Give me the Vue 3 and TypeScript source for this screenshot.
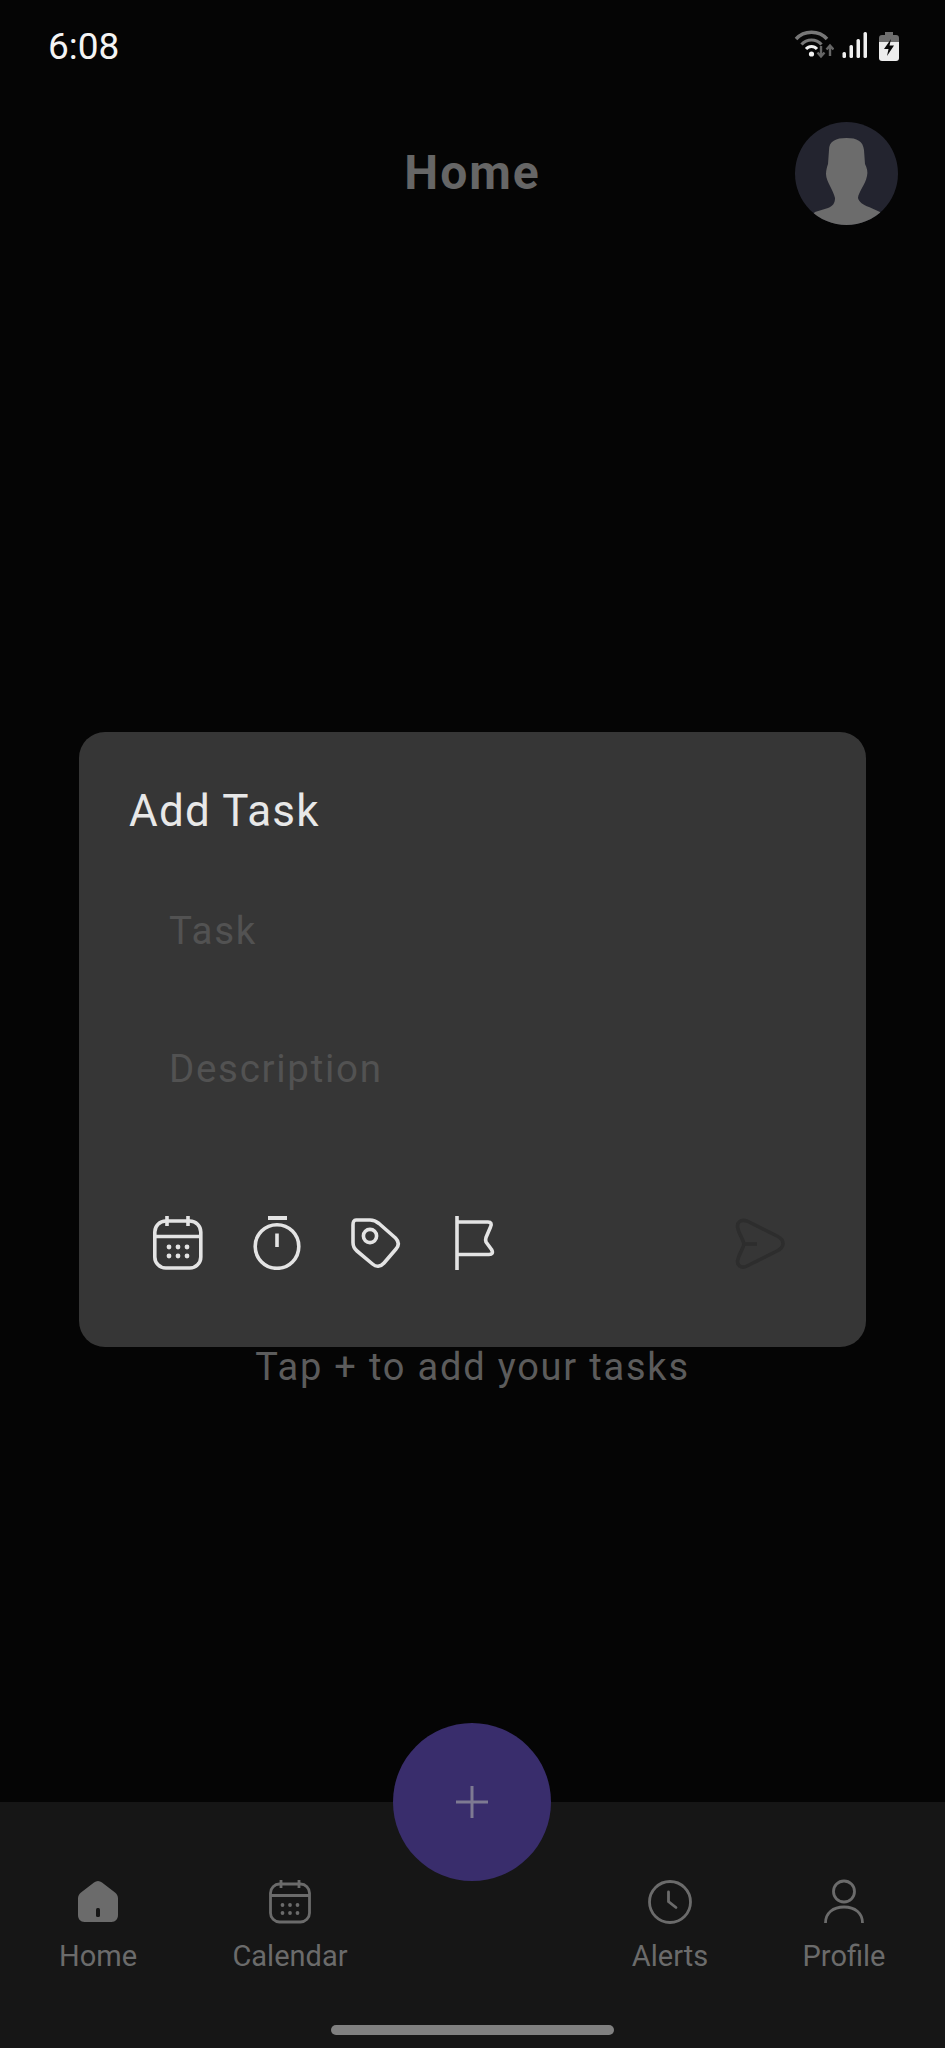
<script setup lang="ts">
interface NavItem { label: string; icon: string }
const navLeft: NavItem[] = [
  { label: 'Home', icon: 'home' },
  { label: 'Calendar', icon: 'calendar' },
]
const navRight: NavItem[] = [
  { label: 'Alerts', icon: 'clock' },
  { label: 'Profile', icon: 'user' },
]
const dots = [0, 1, 2].flatMap((c) => [0, 1].map((r) => ({ x: 16 + c * 9, y: 31 + r * 9, k: `${c}-${r}` })))
const smallDots = [0, 1, 2].flatMap((c) => [0, 1].map((r) => ({ x: 16.500 + c * 7.500, y: 26 + r * 8, k: `${c}-${r}` })))
</script>

<template>
  <div class="screen">
    <div class="status">
      <span class="time">6:08</span>
      <div class="status-icons">
        <svg width="40" height="30" viewBox="0 0 40 30" fill="none">
          <path d="M2 9 C10 0 25 0 33 9" stroke="#777" stroke-width="3.400" />
          <path d="M7.500 14.500 C13 8.500 22 8.500 27.500 14.500" stroke="#777" stroke-width="3.200" />
          <path d="M12 19 C15 15.500 20 15.500 23 19" stroke="#f2f2f2" stroke-width="3" />
          <circle cx="17.500" cy="24" r="2.600" fill="#f2f2f2" />
          <path d="M27 16v10M23.500 22.500l3.500 4 3.500-4" stroke="#666" stroke-width="2.400" />
          <path d="M36 26v-10M32.500 19.500l3.500-4 3.500 4" stroke="#666" stroke-width="2.400" />
        </svg>
        <svg class="signal" width="26" height="26" viewBox="0 0 26 26" fill="#efefef">
          <rect x="0.500" y="20" width="3.500" height="6" rx="1.500" />
          <rect x="7.500" y="13" width="3.500" height="13" rx="1.500" />
          <rect x="14.500" y="7" width="3.500" height="19" rx="1.500" />
          <rect x="21.500" y="0" width="3.500" height="26" rx="1.500" />
        </svg>
        <svg class="battery" width="20" height="29" viewBox="0 0 20 29">
          <path d="M6 0h8v3h3a3 3 0 0 1 3 3v6H0V6a3 3 0 0 1 3-3h3z" fill="#6e6e6e" />
          <path d="M0 10h20v16a3 3 0 0 1-3 3H3a3 3 0 0 1-3-3z" fill="#ededed" />
          <path d="M12 7L5 17h4.500L8 24l7-10.500h-4.500z" fill="#0a0a0a" />
        </svg>
      </div>
    </div>

    <header class="header">
      <h1 class="title">Home</h1>
      <svg class="avatar" width="103" height="103" viewBox="0 0 103 103">
        <defs>
          <clipPath id="avatar-clip"><circle cx="51.500" cy="51.500" r="51.500" /></clipPath>
        </defs>
        <g clip-path="url(#avatar-clip)">
          <rect width="103" height="103" fill="#23242f" />
          <path
            d="M34 28C34 19 41 16 51.500 16S68 19 69 28L70 42C72 46 73 50 72 54C71 59 69 62 67 66C65 70 63 73 63 76C64 80 68 83 74 85L85 90L95 103H8L20 90L33 86C38 84 40 81 40 76C39 72 37 68 35 64C33 60 31 56 31 52C31 48 32 45 33 42Z"
            fill="#6c6c6c"
          />
        </g>
      </svg>
    </header>

    <main class="content">
      <p class="hint">Tap + to add your tasks</p>
    </main>

    <nav class="bottom">
      <div class="nav-row">
        <div v-for="item in navLeft" :key="item.label" class="nav-item">
          <svg width="48" height="46" viewBox="0 0 48 46" fill="none">
            <template v-if="item.icon === 'home'">
              <path
                d="M20 3.500C22.500 1.500 25.500 1.500 28 3.500L41 13.500C43 15 44 17 44 19.500V36C44 40 41.500 43 37.500 43H10.500C6.500 43 4 40 4 36V19.500C4 17 5 15 7 13.500Z"
                fill="#6b6b6b"
              />
              <rect x="22" y="29" width="4" height="9" rx="1.500" fill="#161616" />
            </template>
            <template v-else>
              <g stroke="#6b6b6b" stroke-width="2.800">
                <rect x="4.500" y="5" width="39" height="38" rx="9" />
                <path d="M4.500 16.500H43.500M15 1V9M33 1V9" />
              </g>
              <circle v-for="d in smallDots" :key="d.k" :cx="d.x" :cy="d.y" r="1.900" fill="#6b6b6b" />
            </template>
          </svg>
          <span class="nav-label">{{ item.label }}</span>
        </div>
        <div class="nav-gap"></div>
        <div v-for="item in navRight" :key="item.label" class="nav-item">
          <svg width="48" height="46" viewBox="0 0 48 46" fill="none" stroke="#6b6b6b" stroke-width="2.800">
            <template v-if="item.icon === 'clock'">
              <circle cx="24" cy="23" r="20.500" />
              <path d="M22.500 13V22.500L30 28.500" stroke-linecap="round" />
            </template>
            <template v-else>
              <circle cx="24" cy="12.500" r="10.500" />
              <path d="M5.500 44C5.500 34 13 28 24 28S42.500 34 42.500 44" />
            </template>
          </svg>
          <span class="nav-label">{{ item.label }}</span>
        </div>
      </div>
      <div class="home-indicator"></div>
    </nav>

    <button class="fab" aria-label="Add">
      <svg width="36" height="36" viewBox="0 0 36 36" stroke="#7e7a92" stroke-width="3">
        <path d="M18 2V34M2 18H34" />
      </svg>
    </button>

    <section class="card">
      <h2 class="card-title">Add Task</h2>
      <div class="field task">Task</div>
      <div class="field desc">Description</div>
      <div class="tools">
        <svg width="50" height="54" viewBox="0 0 50 54" fill="none" stroke="#e4e4e4" stroke-width="3.600">
          <rect x="1.800" y="5" width="46" height="47" rx="11" />
          <path d="M1.800 20.500H47.800M14 0V10M35 0V10" />
          <circle v-for="d in dots" :key="d.k" :cx="d.x" :cy="d.y" r="2.400" fill="#e4e4e4" stroke="none" />
        </svg>
        <svg width="50" height="54" viewBox="0 0 50 54" fill="none" stroke="#e4e4e4" stroke-width="3.600">
          <circle cx="25" cy="30.500" r="21.800" />
          <path d="M16 2H35" stroke-width="4" />
          <path d="M25 17.500V31" />
        </svg>
        <svg width="50" height="54" viewBox="0 0 50 54" fill="none" stroke="#e4e4e4" stroke-width="3.600">
          <path
            d="M5 4H19C23 4 25 5 28 7.500L44.500 22C48 25.500 48 29.500 45 33L33 47C29.500 51 25 51 21.500 48L6 35C3 32.500 2 30.500 2 26.500V9C2 6 3 4 5 4Z"
            stroke-linejoin="round"
          />
          <circle cx="19" cy="20" r="6.600" />
        </svg>
        <svg width="50" height="54" viewBox="0 0 50 54" fill="none" stroke="#e4e4e4" stroke-width="3.600">
          <path d="M7 0V54" />
          <path d="M7 6H38C41 6 42 8 40.500 11L36 21.500C35.500 23 35.500 24.500 36 26L41.500 33.500C43.500 37 42 38.500 39 38.500H7" stroke-linejoin="round" />
        </svg>
        <svg class="send" width="50" height="52" viewBox="0 0 50 52" fill="none" stroke="#2d2d2d" stroke-width="3.600">
          <path
            d="M3 11C1 4 6 1 12 3L42 18C50 22 50 29 42 33L12 48C6 51 1 47 3 41C4.500 35 8 31 9 26C8 21 4.500 17 3 11Z"
            stroke-linejoin="round"
          />
          <path d="M9 26H22" />
        </svg>
      </div>
    </section>
  </div>
</template>

<style>
html,
body {
  margin: 0;
  background: #050505;
}
</style>

<style scoped>
.screen {
  position: relative;
  width: 945px;
  height: 2048px;
  overflow: hidden;
  background: #050505;
  font-family: Roboto, "Liberation Sans", sans-serif;
  display: flex;
  flex-direction: column;
}
.status {
  height: 92px;
  box-sizing: border-box;
  padding: 26px 46px 0 48px;
  display: flex;
  justify-content: space-between;
  align-items: flex-start;
}
.time {
  color: #f4f4f4;
  font-size: 37px;
  line-height: 42px;
}
.status-icons {
  display: flex;
  align-items: flex-start;
  padding-top: 4px;
}
.signal {
  margin: 2px 0 0 8px;
}
.battery {
  margin: 2px 0 0 11px;
}
.header {
  height: 103px;
  margin-top: 30px;
  position: relative;
  display: flex;
  justify-content: center;
  align-items: center;
}
.title {
  margin: -2px 0 0;
  color: #666;
  font-size: 48px;
  font-weight: 700;
  letter-spacing: 2px;
}
.avatar {
  position: absolute;
  right: 47px;
  top: 0;
}
.content {
  flex: 1;
  display: flex;
  flex-direction: column;
  align-items: center;
}
.hint {
  margin: 1119px 0 0;
  color: #5c5c5c;
  font-size: 38px;
  line-height: 46px;
  letter-spacing: 1.800px;
}
.bottom {
  height: 246px;
  background: #161616;
  display: flex;
  flex-direction: column;
  align-items: center;
  box-sizing: border-box;
  padding-top: 77px;
}
.nav-row {
  width: 100%;
  display: grid;
  grid-template-columns: 196px 188px 172px 228px 120px;
}
.nav-item {
  display: flex;
  flex-direction: column;
  align-items: center;
}
.nav-label {
  color: #6b6b6b;
  font-size: 29px;
  line-height: 34px;
  margin-top: 14px;
}
.home-indicator {
  width: 283px;
  height: 10px;
  border-radius: 5px;
  background: #808080;
  margin-top: 52px;
}
.fab {
  position: absolute;
  left: 393px;
  top: 1723px;
  width: 158px;
  height: 158px;
  border: 0;
  padding: 0;
  border-radius: 50%;
  background: #392d6c;
  display: flex;
  align-items: center;
  justify-content: center;
}
.card {
  position: absolute;
  left: 79px;
  top: 732px;
  width: 787px;
  height: 615px;
  box-sizing: border-box;
  padding: 54px 0 0 50px;
  border-radius: 26px;
  background: #363636;
  display: flex;
  flex-direction: column;
}
.card-title {
  margin: 0;
  color: #e8e8e8;
  font-size: 44px;
  font-weight: 400;
  line-height: 50px;
  letter-spacing: 1.200px;
}
.field {
  margin-left: 40px;
  color: #525252;
  font-size: 38.500px;
  line-height: 44px;
  letter-spacing: 1.700px;
}
.task {
  margin-top: 73px;
}
.desc {
  margin-top: 94px;
}
.tools {
  display: flex;
  margin: 125px 0 0 24px;
  gap: 49px;
  padding-right: 81px;
}
.send {
  margin-left: auto;
  margin-top: 2px;
}
</style>
